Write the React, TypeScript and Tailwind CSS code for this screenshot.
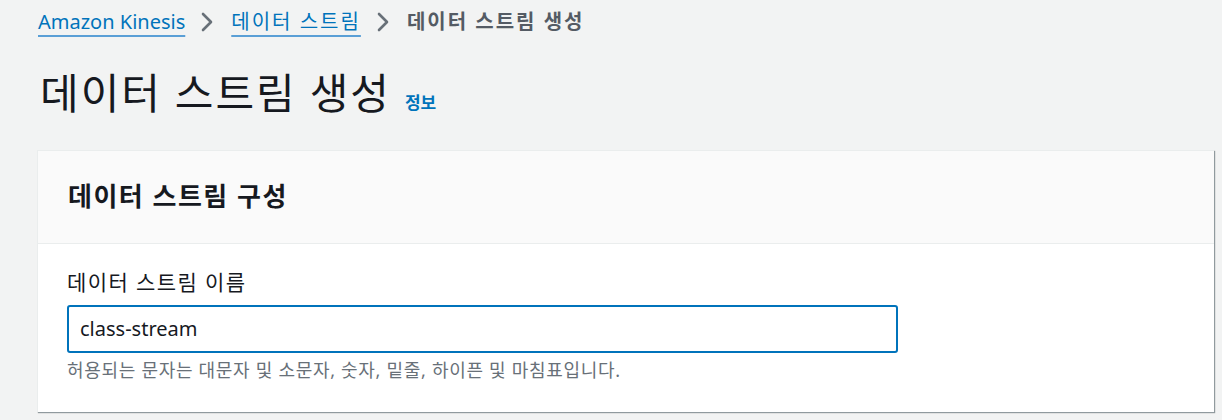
const font = {
  fontFamily: '"Noto Sans", "Noto Sans CJK KR", sans-serif',
};

function Crumb({ label, className }: { label: string; className?: string }) {
  return (
    <a
      href="#"
      className={`text-[20px] leading-[26px] text-[#0073bb] underline decoration-[#5a9fd6] decoration-2 underline-offset-[6px] ${className ?? ""}`}
    >
      {label}
    </a>
  );
}

function Chevron() {
  return (
    <svg
      viewBox="0 0 14 22"
      className="ml-[15px] mr-[17px] h-[22px] w-[14px] text-[#687078]"
      fill="none"
      stroke="currentColor"
      strokeWidth={2.6}
      strokeLinecap="round"
      strokeLinejoin="round"
    >
      <polyline points="3,3 11,11 3,19" />
    </svg>
  );
}

export default function App() {
  return (
    <div className="min-h-[420px] w-full bg-[#f2f3f3] text-[#16191f]" style={font}>
      <div className="pl-[38px] pr-[8px] pt-[8px]">
        {/* Breadcrumbs */}
        <nav className="flex items-center h-[28px]">
          <Crumb label="Amazon Kinesis" className="text-[19.7px]" />
          <Chevron />
          <Crumb label="데이터 스트림" className="tracking-[2px]" />
          <Chevron />
          <span className="text-[20px] leading-[26px] font-bold tracking-[2px] text-[#545b64]">
            데이터 스트림 생성
          </span>
        </nav>

        {/* Page title */}
        <div className="mt-[31px] flex items-baseline gap-[14px] pl-[2px]">
          <h1 className="text-[42px] leading-[52px] font-normal tracking-[2px]">데이터 스트림 생성</h1>
          <a href="#" className="text-[17px] font-bold text-[#0073bb]">
            정보
          </a>
        </div>

        {/* Card */}
        <div className="mt-[31px] -ml-px bg-white border-l border-t border-[#eaeded] shadow-[1px_1px_1px_0_rgba(0,28,36,0.3),1px_1px_1px_0_rgba(0,28,36,0.15)]">
          <div className="h-[93px] bg-[#fafafa] border-b border-[#eaeded] flex items-center px-[30px] pb-[3px]">
            <h2 className="text-[26px] leading-[32px] font-bold tracking-[1.5px]">데이터 스트림 구성</h2>
          </div>
          <div className="px-[29px] pt-[24px] pb-[30px]">
            <label className="block text-[21px] leading-[28px] tracking-[1.4px] text-[#16191f]">
              데이터 스트림 이름
            </label>
            <div className="mt-[9px] w-[831px] h-[48px] border-2 border-[#0073bb] rounded-[3px] flex items-center px-[11px] bg-white">
              <span className="text-[20px] text-[#16191f]">class-stream</span>
            </div>
            <p className="mt-[5px] text-[18px] leading-[24px] tracking-[0.7px] text-[#687078]">
              허용되는 문자는 대문자 및 소문자, 숫자, 밑줄, 하이픈 및 마침표입니다.
            </p>
          </div>
        </div>
      </div>
    </div>
  );
}
